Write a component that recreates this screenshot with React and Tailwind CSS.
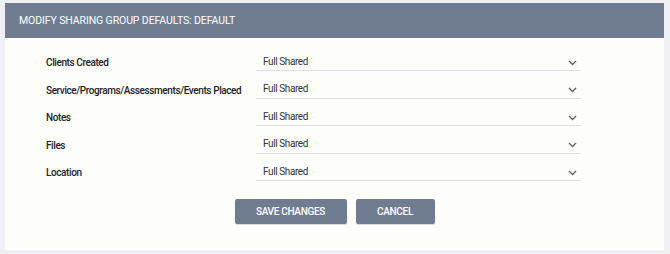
import React from "react";

const rows = [
  "Clients Created",
  "Service/Programs/Assessments/Events Placed",
  "Notes",
  "Files",
  "Location",
];

function Chevron() {
  return (
    <svg width="9" height="6" viewBox="0 0 9 6" className="shrink-0 mt-[3px]">
      <path d="M1 1 L4.5 4.5 L8 1" fill="none" stroke="#5f6368" strokeWidth="1.3" />
    </svg>
  );
}

export default function App() {
  return (
    <div className="w-[670px] h-[254px] bg-[#eef0f4] pt-[3px] pl-[5px] font-['Roboto',sans-serif]">
      <div className="w-[659px] h-[247px] bg-[#fdfdfa] flex flex-col">
        <div className="h-[35px] bg-[#6f7c92] flex items-center pl-[14px] text-white text-[10.5px] tracking-[-0.1px]">
          MODIFY SHARING GROUP DEFAULTS: DEFAULT
        </div>
        <div className="flex flex-col pt-[5.5px] pl-[41px]">
          {rows.map((r) => (
            <div key={r} className="flex h-[27.5px] items-end">
              <div className="w-[210px] h-[17px] flex items-center text-[10px] font-medium tracking-[-0.4px] text-[#222] whitespace-nowrap">
                {r}
              </div>
              <div className="w-[325px] h-[19px] border-b border-[#dcdfe3] flex items-center justify-between pl-[7px] pr-[4px] text-[10px] tracking-[-0.4px] text-[#333]">
                <span>Full Shared</span>
                <Chevron />
              </div>
            </div>
          ))}
        </div>
        <div className="flex justify-center gap-[9px] mt-[18px]">
          <button className="w-[112px] h-[25px] bg-[#6f7c92] text-white text-[10px] font-medium tracking-[-0.3px] rounded-[2px] shadow-[0_1px_1px_rgba(0,0,0,0.15)]">
            SAVE CHANGES
          </button>
          <button className="w-[79px] h-[25px] bg-[#6f7c92] text-white text-[10px] font-medium tracking-[-0.3px] rounded-[2px] shadow-[0_1px_1px_rgba(0,0,0,0.15)]">
            CANCEL
          </button>
        </div>
      </div>
    </div>
  );
}
